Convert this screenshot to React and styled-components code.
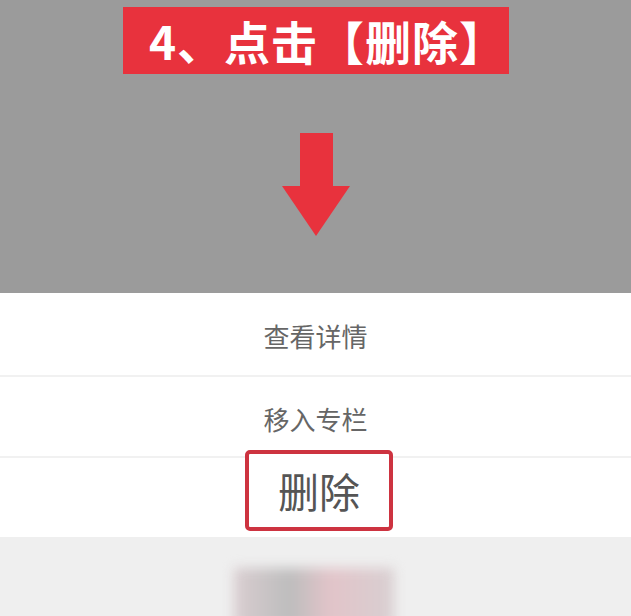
import React from 'react'
import styled, { createGlobalStyle } from 'styled-components'

const Global = createGlobalStyle`
  html, body {
    margin: 0;
    padding: 0;
    background: #efefef;
    font-family: 'Noto Sans CJK SC', 'Noto Sans', sans-serif;
  }
`

const Page = styled.div`
  width: 631px;
  height: 616px;
  overflow: hidden;
  display: flex;
  flex-direction: column;
`

const Mask = styled.div`
  flex-shrink: 0;
  height: 293px;
  background: #9b9b9b;
  display: flex;
  flex-direction: column;
  align-items: center;
`

const Banner = styled.div`
  margin-top: 7px;
  width: 386px;
  height: 67px;
  box-sizing: border-box;
  padding-left: 24px;
  background: #e8323d;
  color: #ffffff;
  font-size: 46px;
  font-weight: 700;
  line-height: 67px;
  text-align: center;
  letter-spacing: 1px;
`

const Arrow = styled.svg`
  margin-top: 59px;
  display: block;
`

const Sheet = styled.div`
  flex-shrink: 0;
  background: #ffffff;
  display: flex;
  flex-direction: column;
`

const Row = styled.div`
  box-sizing: border-box;
  height: ${p => p.$h}px;
  padding-top: 3px;
  display: flex;
  align-items: center;
  justify-content: center;
  border-top: ${p => (p.$divided ? '2px solid #f1f1f1' : 'none')};
  color: #666666;
  font-size: 26px;
`

const Highlight = styled.div`
  position: relative;
  box-sizing: border-box;
  width: 148px;
  height: 81px;
  margin-left: 7px;
  margin-top: -18px;
  background: #ffffff;
  border: 4px solid #cd3340;
  border-radius: 5px;
  display: flex;
  align-items: center;
  justify-content: center;
  color: #555555;
  font-size: 41px;
`

const Footer = styled.div`
  flex: 1;
  min-height: 0;
  overflow: hidden;
  background: #efefef;
  display: flex;
  justify-content: center;
  padding-top: 31px;
`

const Blur = styled.div`
  flex-shrink: 0;
  width: 160px;
  height: 60px;
  margin-left: -4px;
  background: linear-gradient(90deg, #d9cdd0 0%, #bdbdbd 35%, #e2c4c9 60%, #d8cfd1 100%);
  filter: blur(6px);
`

export default function App() {
  return (
    <Page>
      <Global />
      <Mask>
        <Banner>4、点击【删除】</Banner>
        <Arrow width="68" height="103" viewBox="0 0 68 103">
          <rect x="18" y="0" width="33" height="54" fill="#e8323d" />
          <polygon points="0,53 68,53 34,103" fill="#e8323d" />
        </Arrow>
      </Mask>
      <Sheet>
        <Row $h={82}>查看详情</Row>
        <Row $h={81} $divided>移入专栏</Row>
        <Row $h={81} $divided>
          <Highlight>删除</Highlight>
        </Row>
      </Sheet>
      <Footer>
        <Blur />
      </Footer>
    </Page>
  )
}
